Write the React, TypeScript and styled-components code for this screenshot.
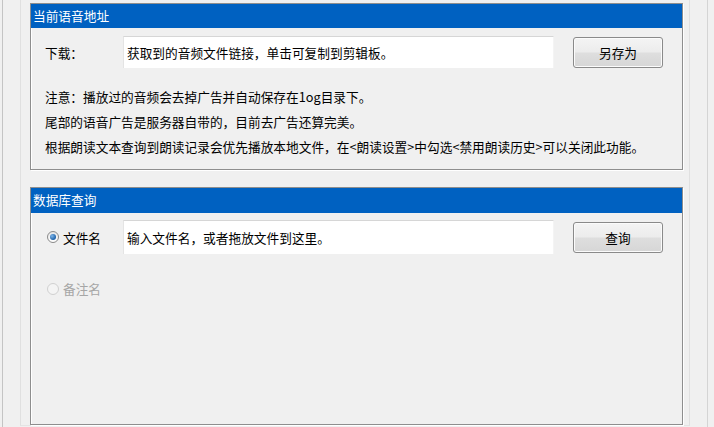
import styled, { createGlobalStyle } from 'styled-components';

const GlobalStyle = createGlobalStyle`
  html, body {
    margin: 0;
    padding: 0;
    background: #f0f0f0;
  }
  * {
    box-sizing: border-box;
  }
  body {
    font-family: "Noto Sans CJK SC", "Microsoft YaHei", sans-serif;
    font-size: 12.7px;
    color: #000;
  }
`;

const Shell = styled.div`
  margin-left: 2px;
  width: 706px;
  height: 427px;
  border-left: 1px solid #c4c4c4;
  border-right: 1px solid #d4d4d4;
  padding-left: 17px;
`;

const Sheet = styled.div`
  width: 670px;
  height: 426px;
  border-left: 1px solid #e0e0e0;
  border-right: 1px solid #e0e0e0;
  border-bottom: 1px solid #e4e4e4;
  padding: 3px 6px 0 9px;
  display: flex;
  flex-direction: column;
  gap: 17px;
`;

const Panel = styled.section<{ $height: number }>`
  height: ${({ $height }) => $height}px;
  border: 1px solid #8e8e8e;
  box-shadow: 1px 1px 0 #ffffff, inset 1px 1px 0 #ffffff;
  display: flex;
  flex-direction: column;
`;

const TitleBar = styled.div<{ $height: number }>`
  height: ${({ $height }) => $height}px;
  background: #0061c1;
  color: #ffffff;
  padding-left: 2px;
  display: flex;
  align-items: center;
  line-height: 1;
`;

const Body = styled.div`
  padding: 0 19px 0 14px;
  display: flex;
  flex-direction: column;
`;

const Row = styled.div<{ $top: number }>`
  margin-top: ${({ $top }) => $top}px;
  display: flex;
  align-items: center;
`;

const Label = styled.label<{ $disabled?: boolean }>`
  width: 78px;
  flex-shrink: 0;
  display: flex;
  align-items: center;
  gap: 4px;
  color: ${({ $disabled }) => ($disabled ? '#a6a6a6' : '#000')};
`;

const TextBox = styled.input<{ $height: number }>`
  width: 431px;
  height: ${({ $height }) => $height}px;
  background: #ffffff;
  border: none;
  border-top: 1px solid #d6d6d6;
  border-left: 1px solid #e4e4e4;
  border-right: 1px solid #f4f4f4;
  padding: 0 3px;
  font: inherit;
  color: #000;
  outline: none;
`;

const Button = styled.button`
  margin-left: 19px;
  width: 90px;
  height: 31px;
  border: 1px solid #8a8a8a;
  border-radius: 3px;
  background: linear-gradient(#f4f4f4 0%, #ececec 48%, #dedede 52%, #d6d6d6 100%);
  box-shadow: inset 0 0 0 1px #fbfbfb;
  font: inherit;
  color: #000;
  padding: 0;
`;

const Notes = styled.div`
  margin-top: 16px;
  display: flex;
  flex-direction: column;
`;

const NoteLine = styled.div`
  height: 25px;
  line-height: 25px;
  white-space: nowrap;
`;

const Radio = styled.span<{ $checked?: boolean; $disabled?: boolean }>`
  margin-left: 2px;
  width: 12px;
  height: 12px;
  border-radius: 50%;
  border: 1px solid ${({ $disabled }) => ($disabled ? '#d0d0d0' : '#8a8a8a')};
  background: ${({ $disabled }) =>
    $disabled ? '#f4f4f4' : 'linear-gradient(#e6e6e6, #ffffff)'};
  display: flex;
  align-items: center;
  justify-content: center;

  &::after {
    content: '';
    display: ${({ $checked }) => ($checked ? 'block' : 'none')};
    width: 6px;
    height: 6px;
    border-radius: 50%;
    background: radial-gradient(circle at 35% 35%, #7fb6e8, #1b5fa8 70%);
  }
`;

export default function App() {
  return (
    <>
      <GlobalStyle />
      <Shell>
        <Sheet>
          <Panel $height={167}>
            <TitleBar $height={24}>当前语音地址</TitleBar>
            <Body>
              <Row $top={8}>
                <Label>下载：</Label>
                <TextBox $height={32} readOnly value="获取到的音频文件链接，单击可复制到剪辑板。" />
                <Button>另存为</Button>
              </Row>
              <Notes>
                <NoteLine>注意：播放过的音频会去掉广告并自动保存在1og目录下。</NoteLine>
                <NoteLine>尾部的语音广告是服务器自带的，目前去广告还算完美。</NoteLine>
                <NoteLine>
                  根据朗读文本查询到朗读记录会优先播放本地文件，在&lt;朗读设置&gt;中勾选&lt;禁用朗读历史&gt;可以关闭此功能。
                </NoteLine>
              </Notes>
            </Body>
          </Panel>
          <Panel $height={238}>
            <TitleBar $height={25}>数据库查询</TitleBar>
            <Body>
              <Row $top={7}>
                <Label>
                  <Radio $checked />
                  文件名
                </Label>
                <TextBox $height={34} readOnly value="输入文件名，或者拖放文件到这里。" />
                <Button>查询</Button>
              </Row>
              <Row $top={25}>
                <Label $disabled>
                  <Radio $disabled />
                  备注名
                </Label>
              </Row>
            </Body>
          </Panel>
        </Sheet>
      </Shell>
    </>
  );
}
